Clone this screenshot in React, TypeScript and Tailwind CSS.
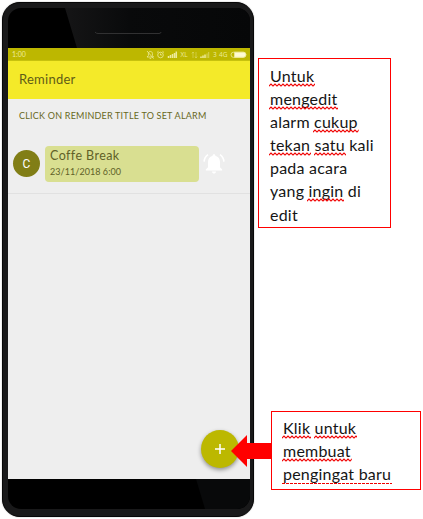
import React from 'react';

function Word({ children, dashed = false }: { children: string; dashed?: boolean }) {
  const id = 'w-' + children.replace(/\s/g, '');
  return (
    <span className="relative inline-block">
      {children}
      <svg className="absolute -left-px top-[19px] h-[4px] w-[calc(100%+2px)]" aria-hidden="true">
        <defs>
          <pattern id={id} width="4" height="4" patternUnits="userSpaceOnUse">
            <path
              d={dashed ? 'M0 2.5H3' : 'M-1 2L0 3L2 1L4 3L5 2'}
              fill="none"
              stroke="#f00000"
              strokeWidth={dashed ? 1 : 1.2}
            />
          </pattern>
        </defs>
        <rect width="100%" height="4" fill={`url(#${id})`} />
      </svg>
    </span>
  );
}

function StatusIcons() {
  return (
    <svg width="104" height="13" viewBox="146 48 104 13" fill="none" stroke="#eeeb9c" strokeWidth="0.8">
      <path d="M147 57H153.5L152.4 55.6V53.5C152.4 50.8 148.4 50.8 148.4 53.5V55.5ZM149.6 58.4H151.2M147 51L153.6 58.6" />
      <circle cx="160.5" cy="55" r="2.8" />
      <path d="M160.5 53.5V55H162M157 52.5L158.5 51.3M164 52.5L162.5 51.3" />
      <path d="M168.5 58V56M170.5 58V55M172.5 58V54M174.5 58V53M176.3 58V51.5" strokeWidth="1.5" />
      <path d="M193 52V58M191.8 53.5L193 52L194 53.2M196 52V58M195 56.5L196 58L197.2 56.5" opacity="0.5" />
      <path d="M201 58V56.4M203 58V55.5M205 58V54.5" strokeWidth="1.5" />
      <path d="M207 58V53.5M208.6 58V52" strokeWidth="1.3" opacity="0.45" />
      <g fill="#eeeb9c" stroke="none" fontFamily="'Open Sans', sans-serif" fontSize="6.5">
        <text x="180.5" y="57">XL</text>
        <text x="213" y="57">3</text>
        <text x="219" y="57">4G</text>
      </g>
      <rect x="231" y="52.2" width="14.8" height="5.2" rx="2.6" />
      <path d="M234.5 52.3H243.5A2.3 2.3 0 0 1 243.5 57.2H234.5Z" fill="#fffbd1" />
    </svg>
  );
}

function BellIcon() {
  return (
    <svg className="ml-[4px] mt-[7px]" width="22" height="22" viewBox="0 0 22 22">
      <path
        d="M11 1.2C11.9 1.2 12.4 1.8 12.4 2.7C15.4 3.5 17 6 17 9V14.3L19.2 16.5V17.6H2.8V16.5L5 14.3V9C5 6 6.6 3.5 9.6 2.7C9.6 1.8 10.1 1.2 11 1.2ZM9 18.5H13C12.8 21.3 9.2 21.3 9 18.5Z"
        fill="#fff"
      />
      <path d="M5 1.7C2.6 3.4 1.3 5.8 1.1 8.6M17 1.7C19.4 3.4 20.7 5.8 20.9 8.6" fill="none" stroke="#fff" strokeWidth="1.6" />
    </svg>
  );
}

function Phone() {
  return (
    <div className="relative ml-[2px] mt-[2px] flex h-[515px] w-[252px] shrink-0 flex-col overflow-hidden rounded-[18px] border border-[#070707] bg-[#19191a] pl-[5px] pr-[3px] shadow-[0_0_1px_#555]">
      <div className="relative mt-[5px] h-[40px] shrink-0 overflow-hidden rounded-t-[13px] bg-black">
        <svg className="block" width="242" height="40">
          <defs>
            <linearGradient id="glass" x1="0" x2="1">
              <stop stopColor="#151516" />
              <stop offset="0.35" stopColor="#090a0b" />
              <stop offset="1" stopColor="#060708" />
            </linearGradient>
          </defs>
          <path d="M57 0H242V40H69Z" fill="url(#glass)" />
          <path d="M87 24Q88 25.5 90 25.5H151Q153 25.5 153 24" stroke="#313132" fill="none" />
        </svg>
      </div>
      <main className="flex h-[431px] w-[242px] shrink-0 flex-col bg-[#eee] font-['Lato',sans-serif]">
        <div className="flex h-[13px] items-center justify-between border-b border-[#c8c20e] bg-[#bdb700]">
          <span className="pl-[4px] text-[7px] leading-none text-[#eeeb9c]">1:00</span>
          <StatusIcons />
        </div>
        <header className="flex h-[38px] items-center bg-[#f4ea29] pl-[11px] text-[13px] tracking-[0.25px] text-[#5f5c18]">
          Reminder
        </header>
        <p className="ml-[11px] mt-[11px] h-[14px] whitespace-nowrap text-[9px] leading-[12px] tracking-[0.22px] text-[#68681d]">
          CLICK ON REMINDER TITLE TO SET ALARM
        </p>
        <div className="mt-[22px] flex h-[48px] border-b border-[#e1e1e1] pl-[5px]">
          <div className="mt-[4px] flex size-[27px] items-center justify-center rounded-full bg-[#817e16] font-['Roboto',sans-serif] text-[12px] text-white">
            C
          </div>
          <div className="ml-[5px] h-[36px] w-[154px] rounded-[4px] bg-[#d9df91] pl-[5px] text-[#606128]">
            <div className="h-[20px] text-[12.5px] leading-[20px] tracking-[0.42px]">Coffe Break</div>
            <div className="text-[9px] leading-[12px] tracking-[0.06px]">23/11/2018 6:00</div>
          </div>
          <BellIcon />
        </div>
        <button aria-label="Add reminder" className="mb-[11px] mr-[11px] mt-auto flex size-[38px] items-center justify-center self-end rounded-full bg-[#bcb800] shadow-[0_2px_4px_#0006]">
          <svg width="12" height="12" stroke="#fff" strokeWidth="1.5">
            <path d="M6 1V11M1 6H11" />
          </svg>
        </button>
      </main>
      <div className="h-[30px] shrink-0 overflow-hidden rounded-b-[13px] bg-black">
        <svg className="block" width="242" height="30">
          <path d="M188 0H242V30H197Z" fill="#08090a" />
        </svg>
      </div>
    </div>
  );
}

export default function App() {
  return (
    <div className="relative flex h-[519px] w-[423px] overflow-hidden bg-white">
      <Phone />
      <aside className="flex flex-col pl-[4px] pt-[58px] font-['Lato',sans-serif] text-[16px] leading-[23.1px] tracking-[0.22px] text-[#151515]">
        <div className="h-[170px] w-[133px] whitespace-nowrap border border-[#f00] pl-[11px] pt-[5px]">
          <div><Word>Untuk</Word></div>
          <div><Word>mengedit</Word></div>
          <div>alarm <Word>cukup</Word></div>
          <div><Word>tekan</Word> <Word>satu</Word> kali</div>
          <div>pada acara</div>
          <div>yang <Word>ingin</Word> di</div>
          <div>edit</div>
        </div>
        <div className="ml-[13px] mt-[183px] h-[79px] w-[150px] whitespace-nowrap border border-[#f00] pl-[11px] pt-[4px]">
          <div><Word>Klik</Word> <Word>untuk</Word></div>
          <div><Word>membuat</Word></div>
          <div><Word dashed>pengingat baru</Word></div>
        </div>
      </aside>
      <svg className="absolute left-[231px] top-[435px]" width="41" height="33">
        <path d="M0 16L16 0V8H41V24H16V32Z" fill="#f00" />
      </svg>
    </div>
  );
}
